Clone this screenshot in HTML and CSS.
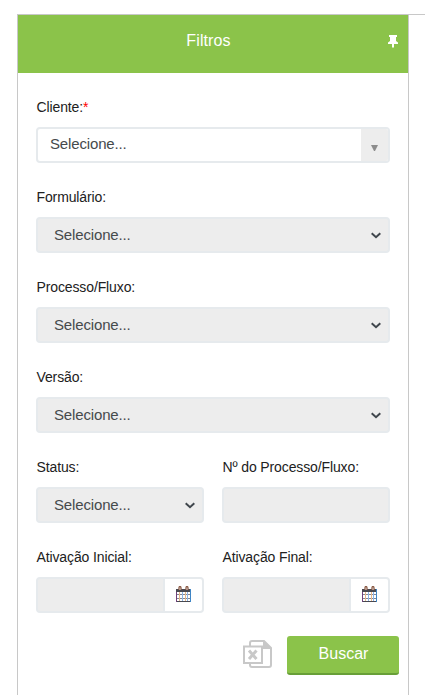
FILE: index.html
```html
<!DOCTYPE html>
<html lang="pt-BR">
<head>
<meta charset="utf-8">
<title>Filtros</title>
<link rel="stylesheet" href="styles.css">
</head>
<body>
<main class="page">
  <section class="panel">
    <header class="panel-header">
      <h1>Filtros</h1>
      <svg class="pin" width="10" height="13" viewBox="0 0 10 13"><path d="M1 0h8v2H8v4l2 1.500V9H6v3L5 13 4 12V9H0V7.500L2 6V2H1z"/></svg>
    </header>
    <form class="filters">
      <div class="field wide">
        <label>Cliente:<span class="required">*</span></label>
        <div class="control combo"><span class="value">Selecione...</span><span class="trigger"><svg width="7" height="6" viewBox="0 0 7 6"><path d="M0 0h7L4 6H3z"/></svg></span></div>
      </div>
      <div class="field wide">
        <label>Formulário:</label>
        <div class="control select">Selecione...<svg class="chevron" width="10" height="7" viewBox="0 0 10 7"><path d="M.7 1.200L5 5.200l4.300-4"/></svg></div>
      </div>
      <div class="field wide">
        <label>Processo/Fluxo:</label>
        <div class="control select">Selecione...<svg class="chevron" width="10" height="7" viewBox="0 0 10 7"><path d="M.7 1.200L5 5.200l4.300-4"/></svg></div>
      </div>
      <div class="field wide">
        <label>Versão:</label>
        <div class="control select">Selecione...<svg class="chevron" width="10" height="7" viewBox="0 0 10 7"><path d="M.7 1.200L5 5.200l4.300-4"/></svg></div>
      </div>
      <div class="field">
        <label>Status:</label>
        <div class="control select">Selecione...<svg class="chevron" width="10" height="7" viewBox="0 0 10 7"><path d="M.7 1.200L5 5.200l4.300-4"/></svg></div>
      </div>
      <div class="field">
        <label>Nº do Processo/Fluxo:</label>
        <div class="control"></div>
      </div>
      <div class="field">
        <label>Ativação Inicial:</label>
        <div class="control date"><span class="calendar"><svg width="15" height="16" viewBox="0 0 15 16"><path class="cal-body" d="M0 3h15v13H0z"/><path class="cal-page" d="M1 6h13v9H1z"/><path class="cal-rows" d="M1 8.500h13M1 12.500h13"/><path class="cal-warm" d="M3.500 6v9M9.500 6v9"/><path class="cal-cool" d="M6.500 6v9M11.500 6v9"/><path class="edge-left" d="M.5 6v10"/><path class="edge-right" d="M14.500 3v13"/><path class="ring" d="M3 4V2q0-1.500 1-1.500T5 2v2M10 4V2q0-1.500 1-1.500T12 2v2"/></svg></span></div>
      </div>
      <div class="field">
        <label>Ativação Final:</label>
        <div class="control date"><span class="calendar"><svg width="15" height="16" viewBox="0 0 15 16"><path class="cal-body" d="M0 3h15v13H0z"/><path class="cal-page" d="M1 6h13v9H1z"/><path class="cal-rows" d="M1 8.500h13M1 12.500h13"/><path class="cal-warm" d="M3.500 6v9M9.500 6v9"/><path class="cal-cool" d="M6.500 6v9M11.500 6v9"/><path class="edge-left" d="M.5 6v10"/><path class="edge-right" d="M14.500 3v13"/><path class="ring" d="M3 4V2q0-1.500 1-1.500T5 2v2M10 4V2q0-1.500 1-1.500T12 2v2"/></svg></span></div>
      </div>
    </form>
    <footer class="actions">
      <svg class="excel" width="29" height="28" viewBox="0 0 29 28"><path class="sheet" d="M7 6V3q0-2 2-2h12l7 7v17q0 2-2 2H9q-2 0-2-2v-2"/><path class="fold" d="M20 0l9 9h-9z"/><path class="sheet" d="M1 6.500h18v16.500H1z"/><path class="cross" d="M6 10.500l7.500 8.500M13.500 10.500L6 19"/></svg>
      <button type="button">Buscar</button>
    </footer>
  </section>
</main>
</body>
</html>
```
FILE: styles.css
```css
* {
  box-sizing: border-box;
}

body {
  margin: 0;
  background: #fff;
  color: #212121;
  font: 14px/20px "Liberation Sans", Arial, sans-serif;
  overflow: hidden;
}

.page {
  margin: 14px 0 0 17px;
  height: 681px;
  border-top: 1px solid #c8c8c8;
}

.panel {
  width: 392px;
  height: 680px;
  border: solid #c8c8c8;
  border-width: 0 1px;
}

.panel-header {
  display: flex;
  align-items: center;
  height: 58px;
  padding: 0 10px;
  background: #8bc34a;
  color: #fff;
}

.panel-header h1 {
  flex: 1;
  margin: 0 0 6px 1px;
  font-size: 16px;
  font-weight: 400;
  letter-spacing: 0.100px;
  text-align: center;
}

.pin {
  margin-bottom: 5px;
  fill: #fff;
}

.filters {
  display: grid;
  grid-template-columns: 168px 168px;
  grid-auto-rows: 90px;
  column-gap: 18px;
  padding: 24px 18px 0;
}

.wide {
  grid-column: span 2;
}

.field label {
  display: block;
  height: 30px;
  padding-left: 0.500px;
  letter-spacing: -0.120px;
}

.required {
  color: #f00;
}

.control {
  display: flex;
  align-items: center;
  height: 36px;
  border: 2px solid #e6eaed;
  border-radius: 4px;
  background: #ededed;
  color: #464a4c;
  font-size: 15px;
  letter-spacing: -0.150px;
  overflow: hidden;
}

.select {
  justify-content: space-between;
  padding: 0 7px 0 16px;
}

.chevron path {
  fill: none;
  stroke: #40474d;
  stroke-width: 2;
}

.combo {
  background: #fff;
}

.combo .value {
  flex: 1;
  padding: 0 0 2px 12px;
}

.trigger {
  display: flex;
  align-items: center;
  justify-content: center;
  width: 27px;
  height: 32px;
  padding-top: 6px;
  background: #ededed;
  fill: #8c8c8c;
}

.date {
  justify-content: flex-end;
}

.calendar {
  display: flex;
  align-items: center;
  justify-content: center;
  width: 39px;
  height: 32px;
  padding-bottom: 2px;
  border-left: 2px solid #e6eaed;
  background: #fff;
}

.cal-body {
  fill: #484850;
}

.cal-page {
  fill: #fff;
}

.cal-rows {
  stroke: #85858f;
}

.cal-warm {
  stroke: #e6b98c;
}

.cal-cool {
  stroke: #8cb4e6;
}

.edge-left {
  stroke: #70407c;
}

.edge-right {
  stroke: #3f85c5;
}

.ring {
  fill: #fff;
  stroke: #8a5a45;
  stroke-width: 1.300;
}

.actions {
  display: flex;
  justify-content: flex-end;
  align-items: center;
  gap: 15px;
  padding: 0 9px;
  margin-top: -1px;
}

.excel {
  margin-bottom: 3px;
}

.sheet {
  fill: #fff;
  stroke: #c8c8c8;
  stroke-width: 2;
}

.fold {
  fill: #c8c8c8;
}

.cross {
  fill: none;
  stroke: #c8c8c8;
  stroke-width: 3;
}

.actions button {
  width: 112px;
  height: 39px;
  padding: 0 0 2px 1px;
  border: 0;
  border-bottom: 2px solid #689f38;
  border-radius: 3px;
  background: #8bc34a;
  color: #fff;
  font: 16px "Liberation Sans", Arial, sans-serif;
}
```
